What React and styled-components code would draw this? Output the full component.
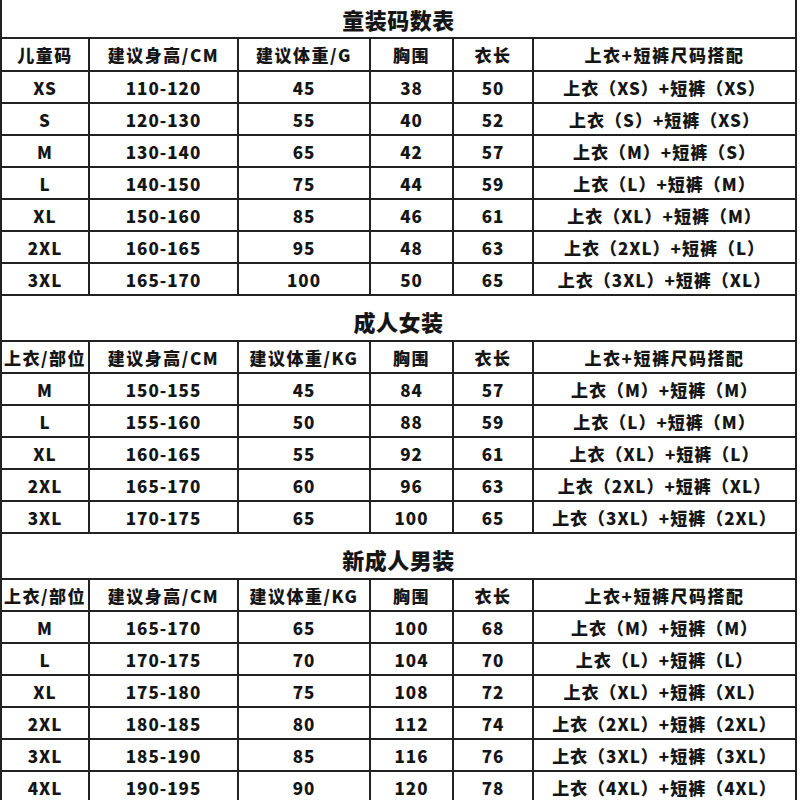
import React from 'react';
import styled, { createGlobalStyle } from 'styled-components';

const GlobalStyle = createGlobalStyle`
  html, body {
    margin: 0;
    padding: 0;
    background: #fff;
  }
  body {
    font-family: "Noto Sans CJK SC", "Liberation Sans", sans-serif;
    color: #151515;
    overflow: hidden;
  }
`;

const LINE = '#222';

const Sheet = styled.div`
  width: 797px;
  height: 800px;
  overflow: hidden;
  border-left: 2px solid ${LINE};
  box-sizing: border-box;
  background: #fff;
`;

const Title = styled.div`
  height: ${(p) => p.$h}px;
  box-sizing: border-box;
  border-right: 2px solid ${LINE};
  border-bottom: 2px solid ${LINE};
  display: flex;
  align-items: center;
  justify-content: center;
  font-size: 22px;
  font-weight: 900;
  letter-spacing: 0.5px;
  padding-top: ${(p) => p.$pt || 0}px;
`;

const Row = styled.div`
  display: grid;
  grid-template-columns: 88px 149px 132px 83px 80px 263px;
  height: ${(p) => p.$h || 32}px;
`;

const Cell = styled.div`
  box-sizing: border-box;
  border-right: 2px solid ${LINE};
  border-bottom: 2px solid ${LINE};
  display: flex;
  align-items: center;
  justify-content: center;
  font-size: 17px;
  letter-spacing: ${(p) => (p.$head ? 1.5 : 1)}px;
  font-weight: 900;
  white-space: nowrap;
  overflow: hidden;
`;

const kids = {
  title: '童装码数表',
  titleH: 39,
  titlePt: 0,
  head: ['儿童码', '建议身高/CM', '建议体重/G', '胸围', '衣长', '上衣+短裤尺码搭配'],
  headH: 33,
  rows: [
    ['XS', '110-120', '45', '38', '50', '上衣（XS）+短裤（XS）'],
    ['S', '120-130', '55', '40', '52', '上衣（S）+短裤（XS）'],
    ['M', '130-140', '65', '42', '57', '上衣（M）+短裤（S）'],
    ['L', '140-150', '75', '44', '59', '上衣（L）+短裤（M）'],
    ['XL', '150-160', '85', '46', '61', '上衣（XL）+短裤（M）'],
    ['2XL', '160-165', '95', '48', '63', '上衣（2XL）+短裤（L）'],
    ['3XL', '165-170', '100', '50', '65', '上衣（3XL）+短裤（XL）'],
  ],
};

const women = {
  title: '成人女装',
  titleH: 46,
  titlePt: 6,
  head: ['上衣/部位', '建议身高/CM', '建议体重/KG', '胸围', '衣长', '上衣+短裤尺码搭配'],
  headH: 32,
  rows: [
    ['M', '150-155', '45', '84', '57', '上衣（M）+短裤（M）'],
    ['L', '155-160', '50', '88', '59', '上衣（L）+短裤（M）'],
    ['XL', '160-165', '55', '92', '61', '上衣（XL）+短裤（L）'],
    ['2XL', '165-170', '60', '96', '63', '上衣（2XL）+短裤（XL）'],
    ['3XL', '170-175', '65', '100', '65', '上衣（3XL）+短裤（2XL）'],
  ],
};

const men = {
  title: '新成人男装',
  titleH: 46,
  titlePt: 6,
  head: ['上衣/部位', '建议身高/CM', '建议体重/KG', '胸围', '衣长', '上衣+短裤尺码搭配'],
  headH: 32,
  rows: [
    ['M', '165-170', '65', '100', '68', '上衣（M）+短裤（M）'],
    ['L', '170-175', '70', '104', '70', '上衣（L）+短裤（L）'],
    ['XL', '175-180', '75', '108', '72', '上衣（XL）+短裤（XL）'],
    ['2XL', '180-185', '80', '112', '74', '上衣（2XL）+短裤（2XL）'],
    ['3XL', '185-190', '85', '116', '76', '上衣（3XL）+短裤（3XL）'],
    ['4XL', '190-195', '90', '120', '78', '上衣（4XL）+短裤（4XL）'],
  ],
};

function SizeTable({ data }) {
  return (
    <>
      <Title $h={data.titleH} $pt={data.titlePt}>{data.title}</Title>
      <Row $h={data.headH}>
        {data.head.map((h, i) => (
          <Cell key={i} $head>{h}</Cell>
        ))}
      </Row>
      {data.rows.map((r, i) => (
        <Row key={i}>
          {r.map((c, j) => (
            <Cell key={j}>{c}</Cell>
          ))}
        </Row>
      ))}
    </>
  );
}

export default function App() {
  return (
    <>
      <GlobalStyle />
      <Sheet>
        <SizeTable data={kids} />
        <SizeTable data={women} />
        <SizeTable data={men} />
      </Sheet>
    </>
  );
}
